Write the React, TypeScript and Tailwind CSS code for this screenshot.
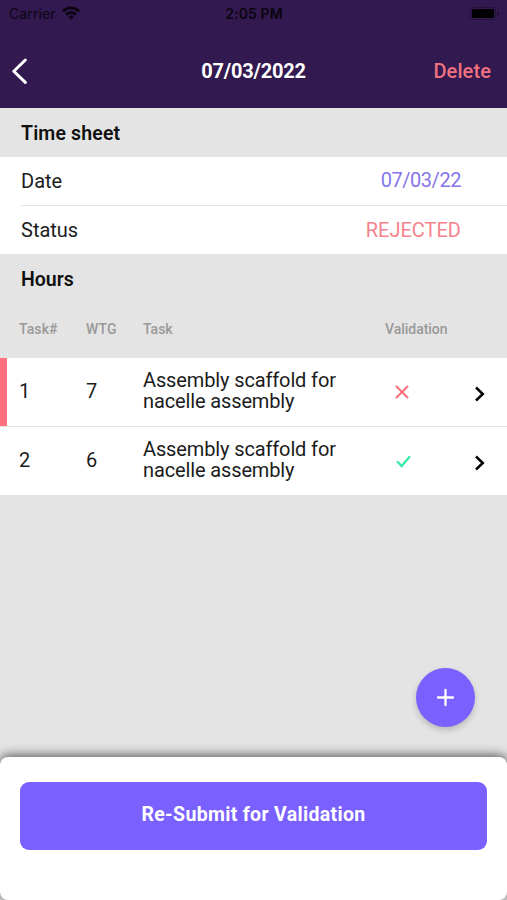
import clsx from 'clsx';

const tasks = [
  { id: 1, wtg: 7, name: 'Assembly scaffold for nacelle assembly', valid: false },
  { id: 2, wtg: 6, name: 'Assembly scaffold for nacelle assembly', valid: true },
];

function StatusBar() {
  return (
    <div className="grid h-[28px] grid-cols-3 items-center pr-[8px] pl-[9px] font-[Inter,sans-serif] text-[14px] leading-none text-[#0b0512]">
      <div className="flex items-center gap-[6px]">
        <span className="tracking-[0.1px]">Carrier</span>
        <svg className="-mt-[2px]" width="18" height="14" viewBox="0 0 18 14" fill="none" stroke="currentColor" strokeWidth="2.8">
          <path d="M1 5.2a11.4 11.4 0 0 1 16 0" />
          <path d="M4 8.7a7.2 7.2 0 0 1 10 0" />
          <path d="M9 13.6 6.3 10.9a3.9 3.9 0 0 1 5.4 0z" fill="currentColor" stroke="none" />
        </svg>
      </div>
      <span className="text-center font-semibold tracking-[0.1px] whitespace-nowrap">2:05 PM</span>
      <svg className="-mt-[2px] justify-self-end" width="29" height="13" viewBox="0 0 29 13">
        <rect x="0.5" y="0.5" width="25" height="12" rx="3" fill="none" stroke="#000" strokeOpacity="0.25" />
        <rect x="2" y="2" width="22" height="9" rx="1.5" fill="#000" />
        <path d="M27 4.5v4a2 2 0 0 0 0-4z" fill="#000" fillOpacity="0.4" />
      </svg>
    </div>
  );
}

function Header() {
  return (
    <header className="h-[108px] bg-[#32194f]">
      <StatusBar />
      <div className="grid h-[86px] grid-cols-[1fr_auto_1fr] items-center pr-[16px] pl-[11px]">
        <svg className="-mt-[1px]" width="17" height="27" viewBox="0 0 17 27" fill="none" stroke="#fff" strokeWidth="3" strokeLinecap="round" strokeLinejoin="round">
          <path d="M14.3 3 2.8 14.2 14.3 25.4" />
        </svg>
        <h1 className="pl-[5px] text-center text-[20px] font-bold tracking-[-0.2px] text-white">07/03/2022</h1>
        <button className="justify-self-end text-[20px] font-medium tracking-[0.1px] text-[#f0717f]">Delete</button>
      </div>
    </header>
  );
}

function TaskRow({ task, last }: any) {
  return (
    <li className={clsx('flex border-[#e4e4e4] bg-white', last ? 'h-[68px]' : 'h-[69px] border-b')}>
      <div className={clsx('w-[7px]', !task.valid && 'bg-[#ff6f7d]')} />
      <div className="w-[67px] pt-[19px] pl-[12px] leading-[28px]">{task.id}</div>
      <div className="w-[69px] pt-[19px] pl-[12px] leading-[28px]">{task.wtg}</div>
      <div className="w-[246px] pt-[12px] pr-[40px] leading-[21px] tracking-[-0.13px]">{task.name}</div>
      <div className="w-[85px] pt-[25px] pl-[5px]">
        {task.valid ? (
          <svg width="18" height="18" viewBox="0 0 18 18" fill="none" stroke="#35eaa5" strokeWidth="2.2">
            <path d="M3 9.3 7.6 14 16 4.2" />
          </svg>
        ) : (
          <svg width="18" height="18" viewBox="0 0 18 18" fill="none" stroke="#ff6f7d" strokeWidth="2.1">
            <path d="m2 3 12 12M14 3 2 15" />
          </svg>
        )}
      </div>
      <svg className="mt-[28px]" width="12" height="16" viewBox="0 0 12 16" fill="none" stroke="#000" strokeWidth="2.5">
        <path d="m2 1.5 6.8 6.5L2 14.5" />
      </svg>
    </li>
  );
}

export default function App() {
  return (
    <div className="flex h-[900px] w-[507px] flex-col overflow-hidden bg-[#e4e4e4] font-[Roboto,sans-serif] text-[20px] text-[#1c1c1c]">
      <Header />
      <h2 className="h-[49px] pl-[21px] text-[19.5px] leading-[51px] font-semibold tracking-[0.15px] text-[#101010]">Time sheet</h2>
      <div className="bg-white pl-[21px]">
        <div className="flex h-[49px] justify-between border-b border-[#e4e4e4] pr-[46px] leading-[48px]">
          <span>Date</span>
          <span className="leading-[46px] tracking-[-0.45px] text-[#8675e8]">07/03/22</span>
        </div>
        <div className="flex h-[48px] justify-between pr-[46px] leading-[48px]">
          <span>Status</span>
          <span className="text-[#f5838e]">REJECTED</span>
        </div>
      </div>
      <h2 className="h-[50px] pl-[21px] text-[19.5px] leading-[51px] font-semibold text-[#101010]">Hours</h2>
      <div className="flex h-[54px] pl-[19px] text-[14px] leading-[50px] font-medium text-[#999]">
        <div className="w-[67px] tracking-[0.1px]">Task#</div>
        <div className="w-[57px] tracking-[0.1px]">WTG</div>
        <div className="w-[242px]">Task</div>
        <div className="tracking-[-0.03px]">Validation</div>
      </div>
      <ul>
        {tasks.map((task, i) => (
          <TaskRow key={task.id} task={task} last={i === tasks.length - 1} />
        ))}
      </ul>
      <div className="flex flex-1 items-end justify-end pr-[32px] pb-[30px]">
        <button className="flex size-[59px] items-center justify-center rounded-full bg-[#7a61ff] shadow-[0_3px_6px_rgba(0,0,0,0.2)]">
          <svg width="19" height="19" viewBox="0 0 19 19" stroke="#fff" strokeWidth="2.3" strokeLinecap="round">
            <path d="M9.5 2v15M2 9.5h15" />
          </svg>
        </button>
      </div>
      <footer className="h-[143px] rounded-[8px] bg-white px-[20px] pt-[25px] shadow-[0_-1px_12px_rgba(0,0,0,0.7)]">
        <button className="h-[68px] w-full rounded-[9px] bg-[#7a61ff] pb-[3px] text-[19.5px] font-bold tracking-[0.33px] text-white">
          Re-Submit for Validation
        </button>
      </footer>
    </div>
  );
}
